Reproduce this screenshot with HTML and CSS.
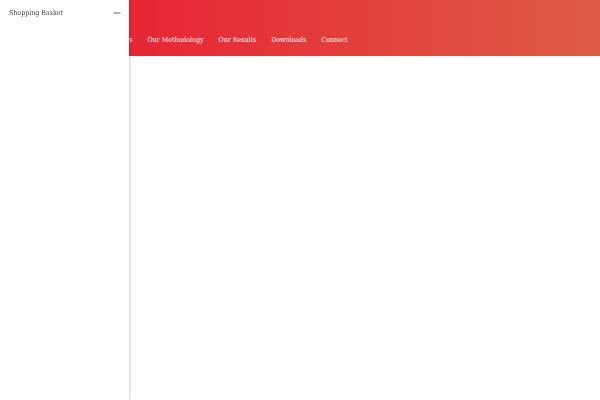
FILE: index.html
```html
<!DOCTYPE html>
<html lang="en">
<head>
    <title>Shopping Basket</title>
    <meta charset="UTF-8">
    <meta name="viewport" content="width=device-width, initial-scale=1.0">
    <link rel="stylesheet" href="styles.css">
</head>
<body>
    <header class="site-header">
        <nav class="main-nav">
            <a href="#">About Us</a>
            <a href="#">Our Methodology</a>
            <a href="#">Our Results</a>
            <a href="#">Downloads</a>
            <a href="#">Connect</a>
        </nav>
    </header>

    <aside class="basket">
        <div class="basket-header">
            <span class="basket-title">Shopping Basket</span>
            <button class="basket-close" type="button" aria-label="Close basket">
                <svg width="8" height="2" viewBox="0 0 8 2"><path d="M0.5 1h7" stroke="#555" stroke-width="0.9"/></svg>
            </button>
        </div>
    </aside>
</body>
</html>
```

FILE: styles.css
```css
body {
    margin: 0;
    background-color: #fff;
    font-family: 'DejaVu Serif Condensed', 'DejaVu Serif', serif;
    font-size: 7px;
    line-height: 10px;
}

.site-header {
    padding: 35px 15px 11px 103px;
    background: linear-gradient(to right, #e82735 25%, #de5c45);
}

.main-nav {
    display: flex;
    gap: 15px;
}

.main-nav a {
    color: #fff;
    text-decoration: none;
    white-space: nowrap;
}

.basket {
    position: fixed;
    top: 0;
    bottom: 0;
    left: 0;
    width: 129px;
    background-color: #fff;
    box-shadow: 0 0 3px rgba(0,0,0,0.35);
}

.basket-header {
    display: flex;
    justify-content: space-between;
    align-items: center;
    padding: 8px 8px 8px 9px;
}

.basket-title {
    color: #444;
}

.basket-close {
    display: flex;
    padding: 0;
    border: none;
    background: none;
    cursor: pointer;
}
```
